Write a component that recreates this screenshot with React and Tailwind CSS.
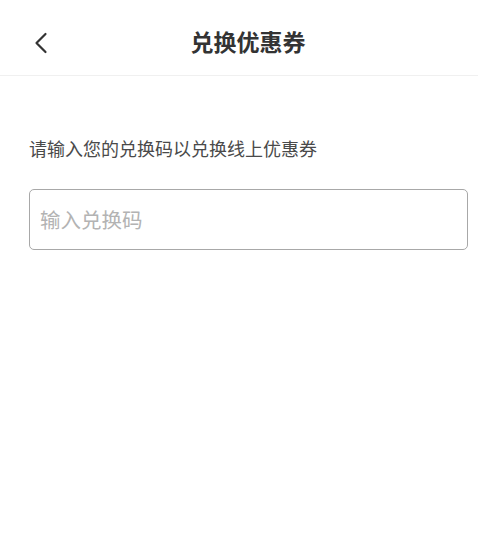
import React from "react";

export default function App() {
  return (
    <div
      className="w-[478px] h-[554px] bg-white flex flex-col"
      style={{ fontFamily: '"Noto Sans CJK SC", "Noto Sans", sans-serif' }}
    >
      <div className="relative h-[76px] flex items-center justify-center border-b border-[#f0f0f0]">
        <div className="absolute left-[33px] top-[31px]">
          <svg width="16" height="24" viewBox="0 0 16 24" fill="none">
            <path d="M12.5 3 L3.5 12 L12.5 21" stroke="#333" strokeWidth="2.2" strokeLinecap="round" strokeLinejoin="round" />
          </svg>
        </div>
        <div className="text-[23px] font-semibold text-[#333] leading-none mt-[8px] pl-[18px]">兑换优惠券</div>
      </div>
      <div className="px-[29px] pt-[60px] flex flex-col">
        <div className="text-[18px] text-[#4a4a4a] leading-[24px]">请输入您的兑换码以兑换线上优惠券</div>
        <div className="mt-[29px] h-[61px] w-[439px] rounded-[5px] border border-[#a8a8a8] flex items-center px-[10px]">
          <span className="text-[20.5px] text-[#b3b3b3]">输入兑换码</span>
        </div>
      </div>
    </div>
  );
}
